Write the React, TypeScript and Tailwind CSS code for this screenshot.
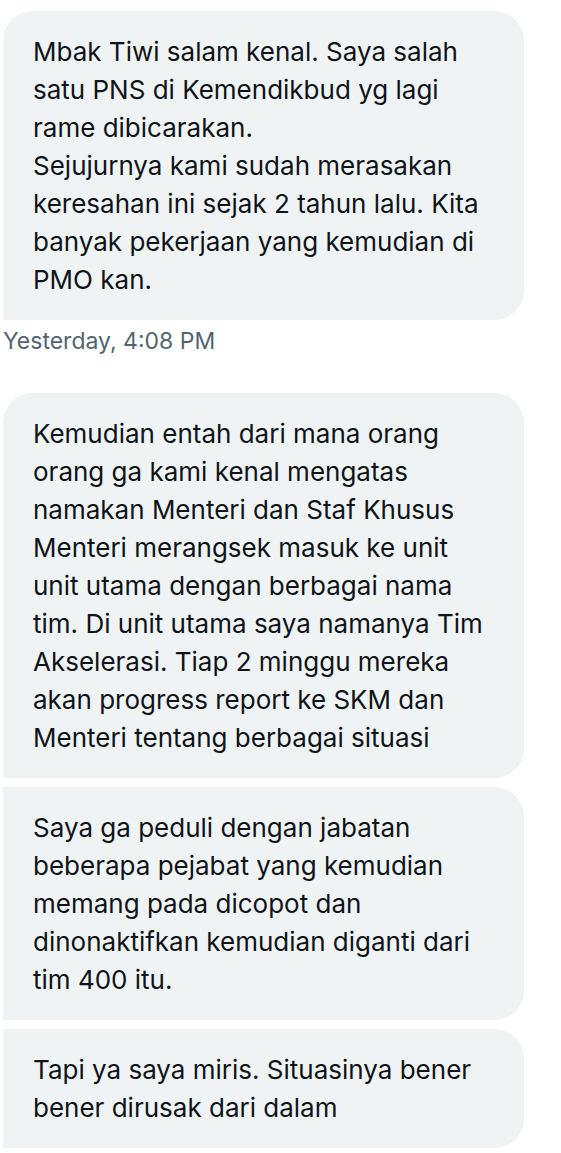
import React from "react"

type Bubble = {
    lines: string[]
    first?: boolean
}

const groups: { bubbles: Bubble[]; time?: string }[] = [
    {
        bubbles: [
            {
                first: true,
                lines: [
                    "Mbak Tiwi salam kenal. Saya salah",
                    "satu PNS di Kemendikbud yg lagi",
                    "rame dibicarakan.",
                    "Sejujurnya kami sudah merasakan",
                    "keresahan ini sejak 2 tahun lalu. Kita",
                    "banyak pekerjaan yang kemudian di",
                    "PMO kan.",
                ],
            },
        ],
        time: "Yesterday, 4:08 PM",
    },
    {
        bubbles: [
            {
                first: true,
                lines: [
                    "Kemudian entah dari mana orang",
                    "orang ga kami kenal mengatas",
                    "namakan Menteri dan Staf Khusus",
                    "Menteri merangsek masuk ke unit",
                    "unit utama dengan berbagai nama",
                    "tim. Di unit utama saya namanya Tim",
                    "Akselerasi. Tiap 2 minggu mereka",
                    "akan progress report ke SKM dan",
                    "Menteri tentang berbagai situasi",
                ],
            },
            {
                lines: [
                    "Saya ga peduli dengan jabatan",
                    "beberapa pejabat yang kemudian",
                    "memang pada dicopot dan",
                    "dinonaktifkan kemudian diganti dari",
                    "tim 400 itu.",
                ],
            },
            {
                lines: [
                    "Tapi ya saya miris. Situasinya bener",
                    "bener dirusak dari dalam",
                ],
            },
        ],
    },
]

const MessageBubble = ({ bubble }: { bubble: Bubble }) => {
    const corners = bubble.first
        ? "rounded-tl-[30px] rounded-tr-[30px] rounded-br-[30px]"
        : "rounded-tr-[30px] rounded-br-[30px]"
    return (
        <div
            className={`w-[521px] bg-[#eff3f4] ${corners} pl-[30px] pr-[20px] pt-[22px] pb-[21px] text-[26px] leading-[38px] text-[#0f1419]`}
        >
            {bubble.lines.map((line, idx) => (
                <div key={idx} className="whitespace-nowrap">
                    {line}
                </div>
            ))}
        </div>
    )
}

export default function App() {
    return (
        <div
            className="w-[561px] min-h-[1153px] bg-white pl-[3px] pt-[11px]"
            style={{ fontFamily: "Inter, 'Noto Sans', sans-serif" }}
        >
            <div className="flex flex-col">
                {groups.map((group, gIdx) => (
                    <div key={gIdx} className="flex flex-col gap-[9px]">
                        {group.bubbles.map((b, bIdx) => (
                            <MessageBubble key={bIdx} bubble={b} />
                        ))}
                        {group.time && (
                            <div className="-mt-[1px] mb-[39px] text-[23px] leading-[26px] text-[#536471]">
                                {group.time}
                            </div>
                        )}
                    </div>
                ))}
            </div>
        </div>
    )
}
